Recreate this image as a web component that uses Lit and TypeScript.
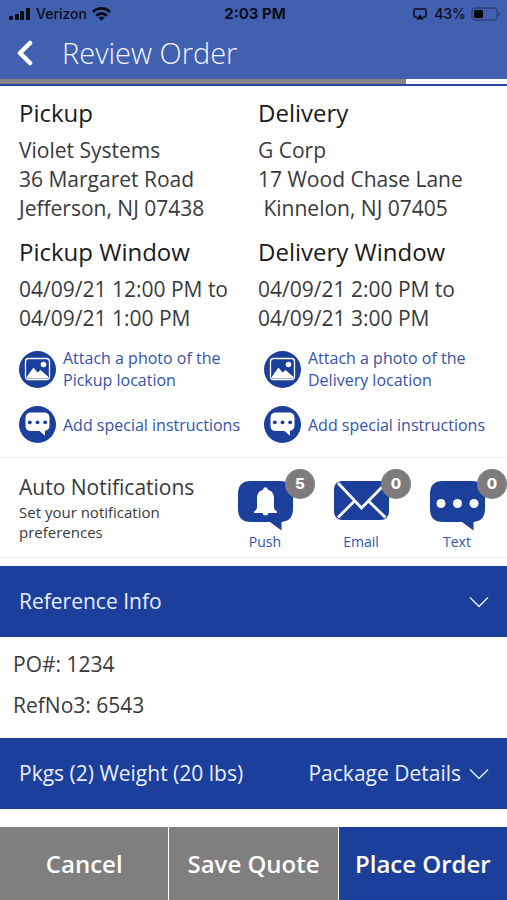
import { LitElement, html, css, svg } from "lit";
import { customElement, property } from "lit/decorators.js";
import { styleMap } from "lit/directives/style-map.js";

type Stop = {
  name: string;
  lines: string[];
  window: string[];
};

const stops: Stop[] = [
  {
    name: "Pickup",
    lines: ["Violet Systems", "36 Margaret Road", "Jefferson, NJ 07438"],
    window: ["04/09/21 12:00 PM to", "04/09/21 1:00 PM"],
  },
  {
    name: "Delivery",
    lines: ["G Corp", "17 Wood Chase Lane", " Kinnelon, NJ 07405"],
    window: ["04/09/21 2:00 PM to", "04/09/21 3:00 PM"],
  },
];

const references = [
  ["PO#:", "1234"],
  ["RefNo3:", "6543"],
];

const photoIcon = html`<svg class="round" viewBox="0 0 37 37" aria-hidden="true">
  <circle cx="18.5" cy="18.5" r="18.5" fill="#1c3f9c" />
  <rect x="6.5" y="7.5" width="24" height="21" rx="3" fill="none" stroke="#fff" stroke-width="1.3" />
  <path d="M8 25.500 14.500 16.500l4 5 3-2.500 7.500 6.500v1q0 1-1.500 1h-18q-1.500 0-1.500-1z" fill="#fff" />
  <circle cx="24.500" cy="13.500" r="2.800" fill="#fff" />
</svg>`;

const noteIcon = html`<svg class="round" viewBox="0 0 37 37" aria-hidden="true">
  <circle cx="18.500" cy="18.500" r="18.500" fill="#1c3f9c" />
  <path d="M12 6.500h13q5.500 0 5.500 5.500v7.500q0 4.500-4.500 5.300v5L20.500 25H12q-5.500 0-5.500-5.500V12q0-5.500 5.500-5.500z" fill="#fff" />
  <circle cx="10.800" cy="16.300" r="1.900" fill="#1c3f9c" />
  <circle cx="18.500" cy="16.300" r="1.900" fill="#1c3f9c" />
  <circle cx="26.200" cy="16.300" r="1.900" fill="#1c3f9c" />
</svg>`;

const bubble = svg`<path d="M13 0h29q13 0 13 13v15q0 12-11.500 13v8.500L32 41H13Q0 41 0 28V13Q0 0 13 0z" fill="#1c3f9c" />`;

const channelArt: Record<string, unknown> = {
  Push: svg`${bubble}
    <circle cx="27.500" cy="8.500" r="2.300" fill="#fff" />
    <path d="M27.500 8.500c6.500 0 8.500 4.500 8.500 9v8.500q0 3 3 4.500v1.500H16V30.500q3-1.500 3-4.500v-8.500c0-4.500 2-9 8.500-9z" fill="#fff" />
    <path d="M24.500 32h6q-.5 2.500-3 2.500t-3-2.500z" fill="#fff" />`,
  Email: svg`<rect x="0" y="0" width="55" height="39" rx="8" fill="#1c3f9c" />
    <path d="M4 2 27.500 27 51 3M4 36.500 20 20.500M51.500 36.500 35 20.500" fill="none" stroke="#fff" stroke-width="2.800" />`,
  Text: svg`${bubble}
    <circle cx="11" cy="22.500" r="4.500" fill="#fff" />
    <circle cx="27.500" cy="22.500" r="4.500" fill="#fff" />
    <circle cx="44" cy="22.500" r="4.500" fill="#fff" />`,
};

const chevron = html`<svg class="chevron" viewBox="0 0 20 12" aria-hidden="true">
  <path d="M1 1.500 10 10.500 19 1.500" fill="none" stroke="#e3eafa" stroke-width="1.500" />
</svg>`;

@customElement("status-bar")
export class StatusBar extends LitElement {
  static styles = css`
    :host {
      display: grid;
      grid-template-columns: 1fr auto 1fr;
      align-items: center;
      height: 28px;
      padding: 0 6px 0 9px;
      font: 500 14px/28px Inter, sans-serif;
      color: #0a0d18;
    }
    .group {
      display: flex;
      align-items: center;
      gap: 5px;
    }
    .end {
      justify-content: flex-end;
    }
    .clock {
      font-size: 15px;
      font-weight: 700;
    }
    .signal {
      width: 22px;
      height: 14px;
    }
    .wifi {
      width: 19px;
      height: 14px;
    }
    .cast {
      width: 14px;
      height: 12px;
      margin-right: 2px;
    }
    .battery {
      width: 30px;
      height: 14px;
    }
  `;

  render() {
    return html`
      <div class="group">
        <svg class="signal" viewBox="0 0 22 14" fill="#0a0d18">
          <rect x="0" y="9" width="4" height="4" rx="1" />
          <rect x="6" y="7" width="4" height="6" rx="1" />
          <rect x="11" y="4" width="4" height="9" rx="1" />
          <rect x="17" y="1" width="4" height="12" rx="1" />
        </svg>
        <span>Verizon</span>
        <svg class="wifi" viewBox="0 0 19 14" fill="none" stroke="#0a0d18" stroke-width="2.800">
          <path d="M1 5a12 12 0 0 1 17 0" />
          <path d="M4.200 8.700a7.500 7.500 0 0 1 10.600 0" />
          <path d="M9.500 13.700 6.500 10.700a4.200 4.200 0 0 1 6 0z" fill="#0a0d18" stroke="none" />
        </svg>
      </div>
      <span class="clock">2:03 PM</span>
      <div class="group end">
        <svg class="cast" viewBox="0 0 14 12">
          <path d="M4 9H2.500Q1 9 1 7.500v-5Q1 1 2.500 1h9Q13 1 13 2.500v5Q13 9 11.500 9H10" fill="none" stroke="#0a0d18" stroke-width="1.500" />
          <path d="M7 6.500 11 11.500H3z" fill="#0a0d18" />
        </svg>
        <span>43%</span>
        <svg class="battery" viewBox="0 0 30 14">
          <rect x="1" y="1" width="25" height="12" rx="3.500" fill="none" stroke="#2c3f78" stroke-width="1.300" />
          <rect x="3" y="3" width="9" height="8" rx="1.500" fill="#05070d" />
          <path d="M27.500 5v4q1.700-.5 1.700-2t-1.700-2z" fill="#2c3f78" />
        </svg>
      </div>
    `;
  }
}

@customElement("notify-channel")
export class NotifyChannel extends LitElement {
  @property() label = "";
  @property({ type: Number }) count = 0;

  static styles = css`
    :host {
      display: block;
    }
    .channel {
      position: relative;
      display: flex;
      flex-direction: column;
      align-items: center;
      width: 96px;
      padding: 0;
      border: 0;
      background: none;
      color: #3553a8;
      font: 400 14px/20px "Open Sans", sans-serif;
      cursor: pointer;
    }
    .art {
      width: 55px;
      height: 51px;
    }
    .badge {
      position: absolute;
      top: -12px;
      left: 68px;
      width: 30px;
      height: 30px;
      border-radius: 50%;
      background: #7f7c7d;
      color: #fff;
      font: 800 15px/30px Inter, sans-serif;
      text-align: center;
    }
  `;

  render() {
    return html`
      <button class="channel" type="button">
        <svg class="art" viewBox="0 0 55 51" aria-hidden="true">${channelArt[this.label]}</svg>
        <span>${this.label}</span>
        <span class="badge">${this.count}</span>
      </button>
    `;
  }
}

@customElement("app-root")
export class AppRoot extends LitElement {
  static styles = css`
    :host {
      display: flex;
      flex-direction: column;
      min-height: 100vh;
      background: #fff;
      color: #3a3a3c;
      font: 400 21px/29px "Open Sans", sans-serif;
    }
    h1,
    h2,
    h3,
    p {
      margin: 0;
      font-size: inherit;
      font-weight: 400;
    }
    button {
      font: inherit;
      border: 0;
      border-radius: 0;
      cursor: pointer;
    }
    .header {
      background: #4160b0;
    }
    .title-row {
      box-sizing: border-box;
      display: flex;
      align-items: center;
      gap: 28px;
      height: 51px;
      padding: 0 16px 2px;
    }
    .back {
      display: flex;
      padding: 0;
      background: none;
    }
    .back-icon {
      width: 18px;
      height: 26px;
    }
    .title {
      color: #f1f5ff;
      font-size: 29px;
      font-weight: 300;
      line-height: 48px;
    }
    .progress {
      height: 5px;
      border-bottom: 2px solid #2c459c;
      background: #fbfdff;
    }
    .progress-fill {
      height: 100%;
      background: #858386;
    }
    .stops {
      display: grid;
      grid-template-columns: 1fr 1fr;
      padding: 10px 10px 0 19px;
    }
    .stop {
      display: flex;
      flex-direction: column;
      gap: 6px;
      padding-bottom: 12px;
    }
    .heading {
      color: #1a1a1c;
      font-size: 24px;
      line-height: 34px;
    }
    .line {
      display: block;
      white-space: pre;
    }
    .actions {
      display: grid;
      grid-template-columns: 1fr 1fr;
      gap: 15px 2px;
      align-items: center;
      padding: 2px 0 14px 19px;
      border-bottom: 1px solid #e9e9eb;
    }
    .action {
      display: flex;
      align-items: center;
      gap: 7px;
      padding: 0;
      background: none;
      color: #3553a8;
      font-size: 16px;
      line-height: 22px;
      text-align: left;
    }
    .round {
      flex: none;
      width: 37px;
      height: 37px;
    }
    .notify {
      display: flex;
      justify-content: space-between;
      padding: 15px 2px 15px 19px;
      border-bottom: 1px solid #e9e9eb;
      margin-bottom: 8px;
    }
    .notify-hint {
      max-width: 170px;
      font-size: 15px;
      line-height: 20px;
    }
    .channels {
      display: flex;
      height: 69px;
      padding-top: 8px;
      margin-bottom: -8px;
    }
    .bar {
      display: flex;
      align-items: center;
      justify-content: space-between;
      height: 71px;
      padding: 0 18px 0 19px;
      background: #1c3f9c;
      color: #e8effd;
      text-align: left;
    }
    .bar-end {
      display: flex;
      align-items: center;
      gap: 8px;
    }
    .chevron {
      width: 20px;
      height: 12px;
    }
    .refs {
      padding: 7px 13px 12px;
      line-height: 41px;
    }
    .footer {
      display: grid;
      grid-template-columns: 1fr 1fr 1fr;
      gap: 1px;
      margin-top: auto;
      padding-top: 17px;
    }
    .footer-button {
      height: 73px;
      padding: 0;
      background: #807e7f;
      color: #fff;
      font-size: 24px;
      font-weight: 600;
      white-space: nowrap;
    }
    .primary {
      background: #1c3f9c;
    }
  `;

  @property({ type: Number }) progress = 80;

  render() {
    return html`
      <header class="header">
        <status-bar></status-bar>
        <div class="title-row">
          <button class="back" type="button" aria-label="Back">
            <svg class="back-icon" viewBox="0 0 18 26">
              <path d="M14 3 4 13 14 23" fill="none" stroke="#fff" stroke-width="4.500" stroke-linecap="round" stroke-linejoin="round" />
            </svg>
          </button>
          <h1 class="title">Review Order</h1>
        </div>
        <div class="progress" role="progressbar" aria-valuenow=${this.progress}>
          <div class="progress-fill" style=${styleMap({ width: `${this.progress}%` })}></div>
        </div>
      </header>

      <section class="stops">
        ${stops.map(
          (s) => html`<div class="stop">
            <h2 class="heading">${s.name}</h2>
            <p>${s.lines.map((l) => html`<span class="line">${l}</span>`)}</p>
          </div>`
        )}
        ${stops.map(
          (s) => html`<div class="stop">
            <h2 class="heading">${s.name} Window</h2>
            <p>${s.window.map((l) => html`<span class="line">${l}</span>`)}</p>
          </div>`
        )}
      </section>

      <section class="actions">
        ${stops.map(
          (s) => html`<button class="action" type="button">
            ${photoIcon}<span>Attach a photo of the<br />${s.name} location</span>
          </button>`
        )}
        ${stops.map(
          () => html`<button class="action" type="button">${noteIcon}<span>Add special instructions</span></button>`
        )}
      </section>

      <section class="notify">
        <div>
          <h3>Auto Notifications</h3>
          <p class="notify-hint">Set your notification preferences</p>
        </div>
        <div class="channels">
          <notify-channel label="Push" .count=${5}></notify-channel>
          <notify-channel label="Email" .count=${0}></notify-channel>
          <notify-channel label="Text" .count=${0}></notify-channel>
        </div>
      </section>

      <button class="bar" type="button"><span>Reference Info</span>${chevron}</button>
      <section class="refs">${references.map(([k, v]) => html`<p>${k} ${v}</p>`)}</section>
      <button class="bar" type="button">
        <span>Pkgs (2) Weight (20 lbs)</span>
        <span class="bar-end">Package Details ${chevron}</span>
      </button>

      <footer class="footer">
        <button class="footer-button" type="button">Cancel</button>
        <button class="footer-button" type="button">Save Quote</button>
        <button class="footer-button primary" type="button">Place Order</button>
      </footer>
    `;
  }
}
